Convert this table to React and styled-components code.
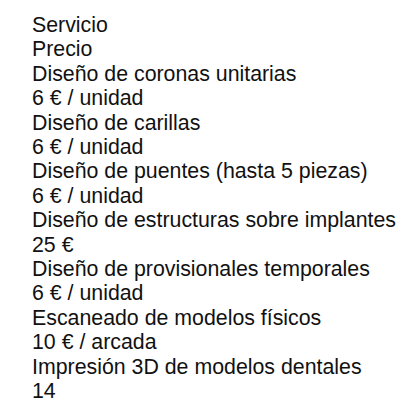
import React from "react";
import styled, { createGlobalStyle } from "styled-components";

const Global = createGlobalStyle`
  html, body { margin: 0; padding: 0; background: #fff; }
  body { font-family: "Liberation Sans", Arial, sans-serif; }
`;

const List = styled.div`
  display: flex;
  flex-direction: column;
  padding: 13px 0 0 32px;
  color: #111;
  font-size: 16pt;
  line-height: 24.4px;
`;

const Line = styled.div``;

const rows = [
  ["Servicio", "Precio"],
  ["Diseño de coronas unitarias", "6 € / unidad"],
  ["Diseño de carillas", "6 € / unidad"],
  ["Diseño de puentes (hasta 5 piezas)", "6 € / unidad"],
  ["Diseño de estructuras sobre implantes", "25 €"],
  ["Diseño de provisionales temporales", "6 € / unidad"],
  ["Escaneado de modelos físicos", "10 € / arcada"],
  ["Impresión 3D de modelos dentales", "14"],
];

export default function App() {
  return (
    <>
      <Global />
      <List>
        {rows.map(([a, b]) => (
          <React.Fragment key={a}>
            <Line>{a}</Line>
            <Line>{b}</Line>
          </React.Fragment>
        ))}
      </List>
    </>
  );
}
